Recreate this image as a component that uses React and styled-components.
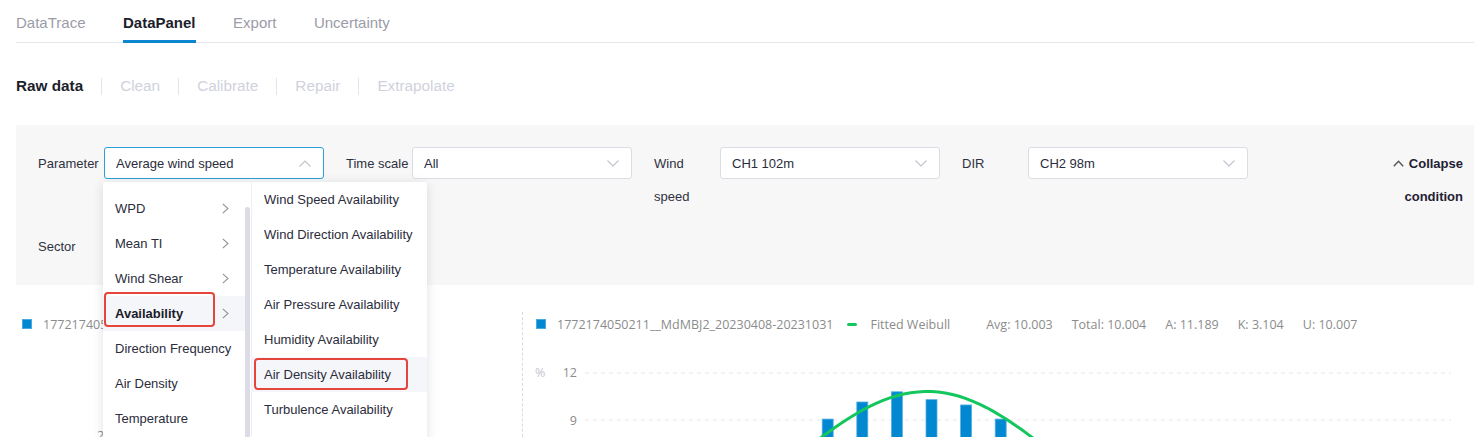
import React from 'react'
import styled, { createGlobalStyle } from 'styled-components'

const GlobalStyle = createGlobalStyle`
  html, body {
    margin: 0;
    padding: 0;
    overflow: hidden;
    background: #fff;
  }
  body {
    font-family: "Liberation Sans", Arial, sans-serif;
  }
`

const Page = styled.div`
  width: 1474px;
  height: 437px;
  overflow: hidden;
  padding-left: 16px;
  box-sizing: border-box;
`

const TabBar = styled.div`
  display: flex;
  height: 43px;
  box-sizing: border-box;
  border-bottom: 1px solid #e6e7ec;
`

const Tab = styled.div`
  height: 43px;
  margin-bottom: -1px;
  margin-right: 37.5px;
  box-sizing: border-box;
  padding-top: 13px;
  line-height: 20px;
  font-size: 15px;
  color: ${p => (p.$active ? '#1d1e2c' : '#9b9ca8')};
  font-weight: ${p => (p.$active ? 700 : 400)};
  border-bottom: 3px solid ${p => (p.$active ? '#0b86d1' : 'transparent')};
`

const SubNav = styled.div`
  display: flex;
  align-items: center;
  height: 24px;
  margin-top: 31px;
`

const SubItem = styled.div`
  font-size: 15.3px;
  line-height: 24px;
  color: ${p => (p.$active ? '#1d1e2c' : '#cfd2dc')};
  font-weight: ${p => (p.$active ? 700 : 400)};
`

const SubSep = styled.span`
  width: 1px;
  height: 17px;
  margin: 0 18px;
  background: #e3e5ec;
`

const Panel = styled.div`
  margin-top: 27px;
  background: #f7f7f8;
  padding: 22px 11px 22px 22px;
  display: flex;
  flex-direction: column;
  gap: 17px;
`

const Row = styled.div`
  display: flex;
  align-items: flex-start;
  gap: 22px;
`

const FormItem = styled.div`
  display: flex;
  align-items: flex-start;
`

const Label = styled.div`
  width: 66px;
  font-size: 13px;
  line-height: 33px;
  color: #2f3140;
`

const Select = styled.div`
  position: relative;
  width: 220px;
  height: 32px;
  box-sizing: border-box;
  border: 1px solid ${p => (p.$focus ? '#2a9fd8' : '#dcdde4')};
  border-radius: 3px;
  background: #fff;
  padding: 0 12px 0 11px;
  display: flex;
  align-items: center;
  justify-content: space-between;
  font-size: 13px;
  color: #2b2d3c;
`

const Collapse = styled.div`
  margin-left: auto;
  width: 84px;
  text-align: right;
  font-size: 13px;
  font-weight: 700;
  line-height: 33px;
  color: #1f2133;

  svg {
    margin-right: 5px;
    vertical-align: 1px;
  }
`

const Cascader = styled.div`
  position: absolute;
  left: -2px;
  top: 34px;
  z-index: 10;
  display: flex;
  background: #fff;
  border-radius: 2px;
  box-shadow: 0 2px 12px rgba(0, 0, 0, 0.12);
`

const Column = styled.div`
  position: relative;
  width: ${p => p.$w}px;
  height: 290px;
  box-sizing: border-box;
  padding-top: ${p => p.$pt}px;
  border-right: ${p => (p.$divider ? '1px solid #eeeff3' : 'none')};
`

const Option = styled.div`
  position: relative;
  height: 35px;
  width: ${p => (p.$narrow ? '142px' : '100%')};
  box-sizing: border-box;
  padding: 0 16px 0 12px;
  display: flex;
  align-items: center;
  justify-content: space-between;
  font-size: 13px;
  white-space: nowrap;
  color: ${p => (p.$bold ? '#1a1b28' : '#2b2d3c')};
  font-weight: ${p => (p.$bold ? 700 : 400)};
  background: ${p => (p.$hover ? '#f5f6fa' : 'transparent')};
`

const Mark = styled.span`
  position: absolute;
  left: ${p => p.$l}px;
  top: ${p => p.$t}px;
  width: ${p => p.$w}px;
  height: ${p => p.$h}px;
  box-sizing: border-box;
  border: 2.5px solid #e5463b;
  border-radius: 4px;
  pointer-events: none;
`

const Thumb = styled.span`
  position: absolute;
  right: 1px;
  top: 25px;
  width: 5px;
  height: 270px;
  border-radius: 3px;
  background: #dcdce6;
`

const ChartsRow = styled.div`
  margin-top: 27px;
  display: grid;
  grid-template-columns: 506px 1fr;
  font-family: "Open Sans", "Noto Sans", sans-serif;
`

const ChartCol = styled.div`
  border-left: ${p => (p.$dashed ? '1px dashed #d9dae2' : 'none')};
  height: 140px;
`

const Legend = styled.div`
  display: flex;
  align-items: center;
  height: 24px;
  padding-left: ${p => p.$pl}px;
  font-size: 12.5px;
  color: #8c8c8c;
  white-space: nowrap;
`

const Swatch = styled.span`
  width: 10px;
  height: 10px;
  box-sizing: border-box;
  background: #0288d1;
  border: 1px solid #4aa9e2;
  margin-right: 11px;
`

const LineKey = styled.span`
  width: 10px;
  height: 3px;
  border-radius: 2px;
  background: #14c65e;
  margin: 0 13px 0 14px;
`

const Stat = styled.span`
  margin-left: ${p => p.$ml}px;
`

const ChevronDown = ({ up }) => (
  <svg width="12" height="7" viewBox="0 0 12 7">
    <polyline
      points={up ? '0.5,6.5 6,1 11.5,6.5' : '0.5,0.5 6,6 11.5,0.5'}
      fill="none"
      stroke="#c0c4cc"
      strokeWidth="1.1"
    />
  </svg>
)

const ChevronRight = () => (
  <svg width="7" height="11" viewBox="0 0 7 11">
    <polyline points="0.8,0.8 6,5.5 0.8,10.2" fill="none" stroke="#909399" strokeWidth="1.1" />
  </svg>
)

const A = 11.189
const K = 3.104
const px = v => 408.5 + (v - 10) * 34.6
const py = val => 84 + (9 - val) * 15.667
const weibull = v => (v <= 0 ? 0 : 100 * (K / A) * Math.pow(v / A, K - 1) * Math.exp(-Math.pow(v / A, K)))

const bars = [0.3, 0.8, 1.9, 3.3, 4.9, 6.4, 7.6, 9.06, 10.15, 10.8, 10.3, 9.96, 9.06, 7.7, 6.2, 4.6, 3.1, 1.9, 1.0, 0.5]

const curvePath = (() => {
  const pts = []
  for (let v = 0; v <= 22; v += 0.2) pts.push(`${px(v).toFixed(1)},${py(weibull(v)).toFixed(1)}`)
  return 'M' + pts.join(' L')
})()

const WeibullChart = () => (
  <svg width="951" height="240" style={{ display: 'block' }}>
    {[12, 9, 6, 3, 0].map(t => (
      <g key={t}>
        <line x1="62" x2="928" y1={py(t)} y2={py(t)} stroke="#e8e8ea" strokeDasharray="4 4" />
        <text x="54" y={py(t) + 4.5} textAnchor="end" fontSize="12.5" fill="#8c8c8c">
          {t}
        </text>
      </g>
    ))}
    <text x="12" y={py(12) + 4.5} fontSize="12.5" fill="#c4c5cc">
      %
    </text>
    {bars.map((b, i) => (
      <rect
        key={i}
        x={px(i) - 5.5}
        y={py(b)}
        width="11"
        height={py(0) - py(b)}
        fill="#0288d1"
        stroke="#57b0e4"
        strokeWidth="0.8"
      />
    ))}
    <path d={curvePath} fill="none" stroke="#14c65e" strokeWidth="3" />
  </svg>
)

const level1 = ['WPD', 'Mean TI', 'Wind Shear', 'Availability', 'Direction Frequency', 'Air Density', 'Temperature']
const withChildren = ['WPD', 'Mean TI', 'Wind Shear', 'Availability']
const level2 = [
  'Wind Speed Availability',
  'Wind Direction Availability',
  'Temperature Availability',
  'Air Pressure Availability',
  'Humidity Availability',
  'Air Density Availability',
  'Turbulence Availability',
  'Wind Shear Availability'
]

export default function App() {
  return (
    <Page>
      <GlobalStyle />
      <TabBar>
        <Tab>DataTrace</Tab>
        <Tab $active>DataPanel</Tab>
        <Tab>Export</Tab>
        <Tab>Uncertainty</Tab>
      </TabBar>

      <SubNav>
        <SubItem $active>Raw data</SubItem>
        <SubSep />
        <SubItem>Clean</SubItem>
        <SubSep />
        <SubItem>Calibrate</SubItem>
        <SubSep />
        <SubItem>Repair</SubItem>
        <SubSep />
        <SubItem>Extrapolate</SubItem>
      </SubNav>

      <Panel>
        <Row>
          <FormItem>
            <Label>Parameter</Label>
            <Select $focus>
              <span>Average wind speed</span>
              <ChevronDown up />
              <Cascader>
                <Column $w={149} $pt={9} $divider>
                  {level1.map(name => (
                    <Option key={name} $narrow $bold={name === 'Availability'} $hover={name === 'Availability'}>
                      <span>{name}</span>
                      {withChildren.includes(name) && <ChevronRight />}
                      {name === 'Availability' && <Mark $l={1} $t={-4} $w={111} $h={35} />}
                    </Option>
                  ))}
                  <Thumb />
                </Column>
                <Column $w={175} $pt={0}>
                  {level2.map(name => (
                    <Option key={name} $hover={name === 'Air Density Availability'}>
                      <span>{name}</span>
                      {name === 'Air Density Availability' && <Mark $l={2} $t={1} $w={154} $h={32} />}
                    </Option>
                  ))}
                </Column>
              </Cascader>
            </Select>
          </FormItem>
          <FormItem>
            <Label>Time scale</Label>
            <Select>
              <span>All</span>
              <ChevronDown />
            </Select>
          </FormItem>
          <FormItem>
            <Label>Wind speed</Label>
            <Select>
              <span>CH1 102m</span>
              <ChevronDown />
            </Select>
          </FormItem>
          <FormItem>
            <Label>DIR</Label>
            <Select>
              <span>CH2 98m</span>
              <ChevronDown />
            </Select>
          </FormItem>
          <Collapse>
            <svg width="11" height="7" viewBox="0 0 11 7">
              <polyline points="0.8,6.2 5.5,1.2 10.2,6.2" fill="none" stroke="#555" strokeWidth="1.4" />
            </svg>
            Collapse condition
          </Collapse>
        </Row>
        <Row>
          <FormItem>
            <Label>Sector</Label>
          </FormItem>
        </Row>
      </Panel>

      <ChartsRow>
        <ChartCol>
          <Legend $pl={6}>
            <Swatch />
            1772174050211__MdMBJ2_20230408-20231031
          </Legend>
          <svg width="506" height="116" style={{ display: 'block' }}>
            <text x="81" y="104" fontSize="12.5" fill="#8c8c8c">
              2
            </text>
          </svg>
        </ChartCol>
        <ChartCol $dashed>
          <Legend $pl={13}>
            <Swatch />
            1772174050211__MdMBJ2_20230408-20231031
            <LineKey />
            Fitted Weibull
            <Stat $ml={36}>Avg: 10.003</Stat>
            <Stat $ml={19}>Total: 10.004</Stat>
            <Stat $ml={19}>A: 11.189</Stat>
            <Stat $ml={19}>K: 3.104</Stat>
            <Stat $ml={19}>U: 10.007</Stat>
          </Legend>
          <WeibullChart />
        </ChartCol>
      </ChartsRow>
    </Page>
  )
}
